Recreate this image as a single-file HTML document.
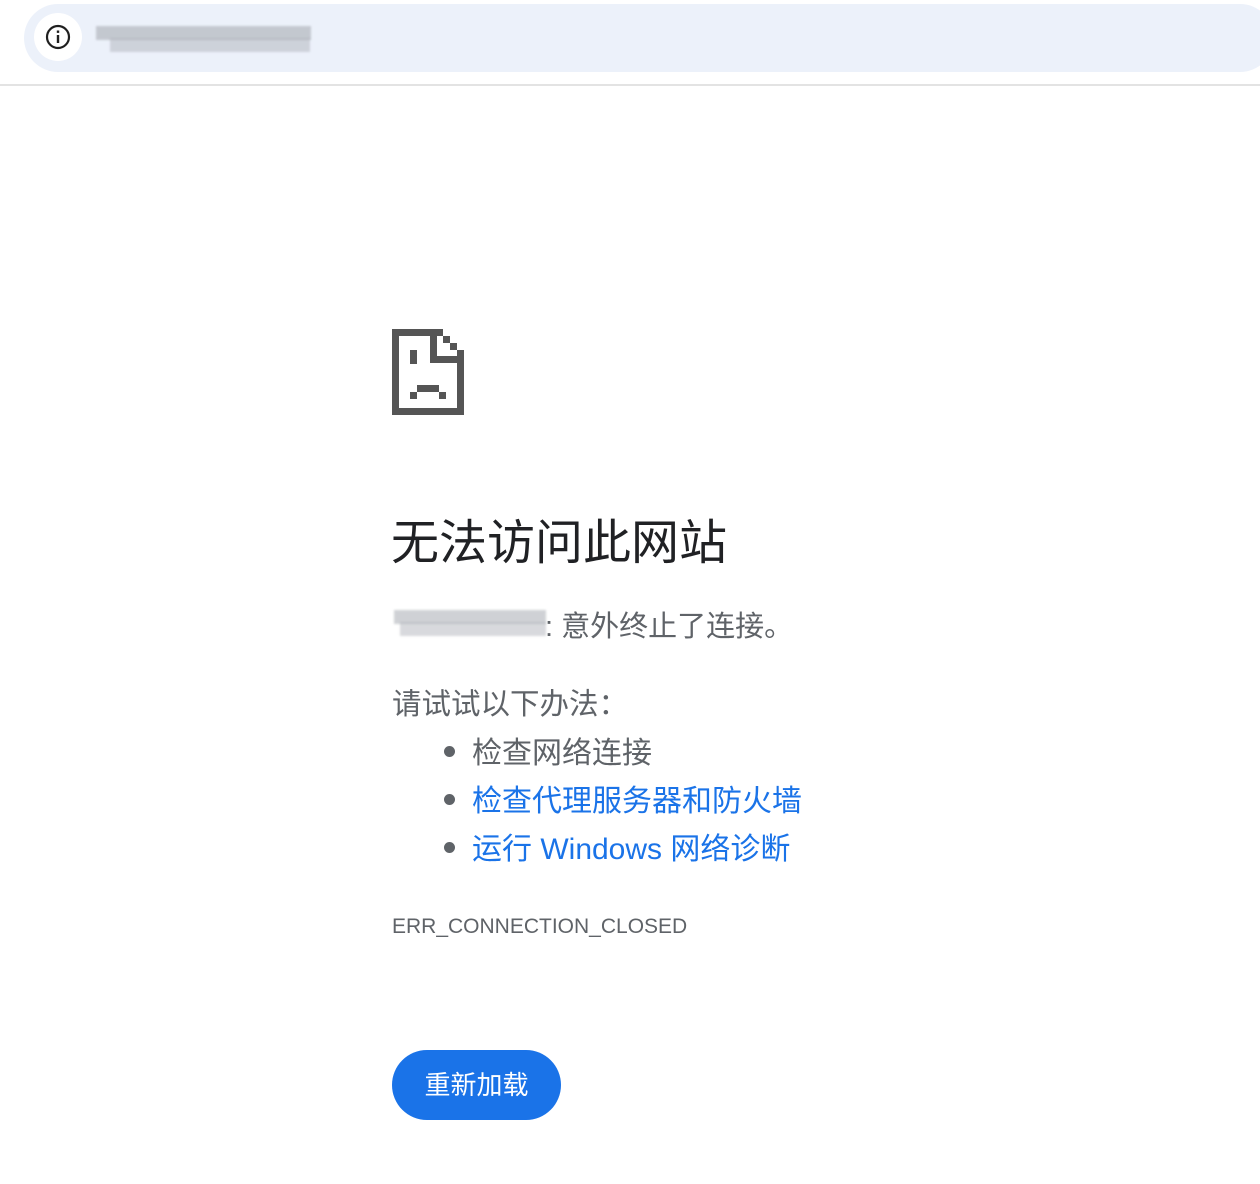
<!DOCTYPE html>
<html><head><meta charset="utf-8"><style>
body{margin:0;width:1260px;height:1184px;background:#fff;position:relative;font-family:"Liberation Sans","Noto Sans CJK SC",sans-serif;overflow:hidden}
.bar{position:absolute;left:24px;top:4px;width:1250px;height:68px;background:#ecf1fa;border-radius:34px}
.line{position:absolute;left:0;top:84px;width:1260px;height:2px;background:#e3e3e3}
.ic{position:absolute;left:34px;top:13px;width:48px;height:48px;border-radius:24px;background:#fff}
.t{position:absolute;white-space:nowrap}
.blur{position:absolute;background:#a9adb4;filter:blur(1px)}
.li{position:absolute;left:472px;font-size:30px;line-height:48px;white-space:nowrap;color:#5f6368}
.dot{position:absolute;left:444px;width:11px;height:11px;border-radius:6px;background:#5f6368}
</style></head><body>
<div class="bar"></div>
<div class="ic"><svg width="48" height="48" viewBox="0 0 48 48"><circle cx="24" cy="24" r="11" fill="none" stroke="#1f1f1f" stroke-width="2.2"/><rect x="22.8" y="22" width="2.4" height="8" fill="#1f1f1f"/><rect x="22.8" y="17.5" width="2.4" height="2.4" fill="#1f1f1f"/></svg></div>
<div class="blur" style="left:96px;top:26px;width:215px;height:14px;opacity:.6"></div>
<div class="blur" style="left:110px;top:38px;width:200px;height:14px;opacity:.45"></div>
<div class="line"></div>

<svg style="position:absolute;left:0;top:0" width="1260" height="1184" fill="#555">
<rect x="392" y="329" width="7" height="86"/>
<rect x="392" y="408" width="72" height="7"/>
<rect x="392" y="329" width="51" height="7"/>
<rect x="430" y="329" width="7" height="34"/>
<rect x="430" y="356" width="34" height="7"/>
<rect x="443" y="336" width="7" height="7"/>
<rect x="450" y="343" width="7" height="7"/>
<rect x="457" y="350" width="7" height="65"/>
<rect x="410" y="350" width="7" height="14"/>
<rect x="417" y="385" width="22" height="7"/>
<rect x="410" y="392" width="7" height="7"/>
<rect x="439" y="392" width="7" height="7"/>
</svg>

<div class="t" style="left:391px;top:514px;font-size:48px;line-height:60px;color:#202124">无法访问此网站</div>
<div class="blur" style="left:394px;top:610px;width:152px;height:14px;opacity:.55"></div>
<div class="blur" style="left:400px;top:622px;width:146px;height:14px;opacity:.45"></div>
<div class="t" style="left:545px;top:607px;font-size:29px;line-height:40px;color:#5f6368">: 意外终止了连接。</div>
<div class="t" style="left:392px;top:685px;font-size:29.5px;line-height:40px;color:#5f6368">请试试以下办法：</div>
<div class="dot" style="top:746px"></div>
<div class="dot" style="top:794px"></div>
<div class="dot" style="top:842px"></div>
<div class="li" style="top:730px">检查网络连接</div>
<div class="li" style="top:778px;color:#1a73e8">检查代理服务器和防火墙</div>
<div class="li" style="top:826px;color:#1a73e8">运行 Windows 网络诊断</div>
<div class="t" style="left:392px;top:912px;font-size:21px;line-height:30px;color:#5f6368">ERR_CONNECTION_CLOSED</div>
<div style="position:absolute;left:392px;top:1050px;width:169px;height:70px;border-radius:35px;background:#1a73e8;color:#fff;font-size:26px;line-height:70px;text-align:center">重新加载</div>
</body></html>
